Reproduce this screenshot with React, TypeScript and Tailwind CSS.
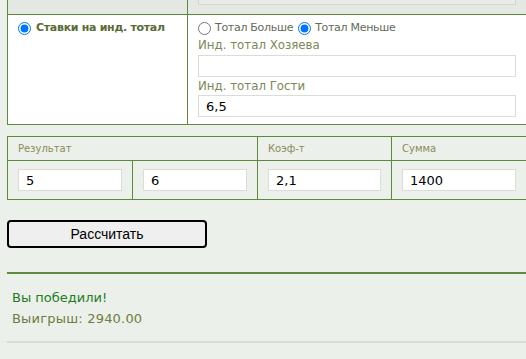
import React from "react";

const G = "border-[#5f8a3d]";

function Field({ value, className = "" }: { value?: string; className?: string }) {
  return (
    <input
      readOnly
      value={value ?? ""}
      className={
        "block w-full h-[22px] bg-white border border-[#d9dcd7] px-[7px] text-[13px] text-black outline-none font-['DejaVu_Sans',sans-serif] " +
        className
      }
    />
  );
}

function Radio({ checked }: { checked?: boolean }) {
  return (
    <input
      type="radio"
      readOnly
      checked={!!checked}
      className="m-0 w-[13px] h-[13px] shrink-0"
    />
  );
}

export default function App() {
  return (
    <div className="w-[526px] h-[359px] overflow-hidden bg-[#ecf0ea] font-['DejaVu_Sans',sans-serif]">
      <div className="pl-[7px]">
        {/* top table */}
        <div className={"w-[520px] border-l border-r border-b " + G}>
          <div className={"grid grid-cols-[180px_338px] h-[15px] bg-[#e4e8e2] border-b overflow-hidden " + G}>
            <div className={"border-r " + G}></div>
            <div className="px-[10px]">
              <div className="-mt-[17px] h-[22px] border border-[#d3d6d1] bg-[#e8ebe6]"></div>
            </div>
          </div>
          <div className="grid grid-cols-[180px_338px] bg-white">
            <div className={"border-r pl-[10px] pt-[6px] " + G}>
              <div className="flex items-center gap-[5px] h-[14px]">
                <Radio checked />
                <span className="text-[11px] tracking-[-0.3px] font-bold text-[#5a6b35]">Ставки на инд. тотал</span>
              </div>
            </div>
            <div className="px-[10px] pt-[6px] pb-[7px]">
              <div className="flex items-center h-[14px] text-[11px] tracking-[-0.3px] text-[#5f6b58]">
                <Radio />
                <span className="ml-[4px]">Тотал Больше</span>
                <span className="ml-[5px] flex"><Radio checked /></span>
                <span className="ml-[4px]">Тотал Меньше</span>
              </div>
              <div className="text-[11.8px] leading-[14px] text-[#7c8758] mt-[3px]">Инд. тотал Хозяева</div>
              <div className="mt-[3px]"><Field /></div>
              <div className="text-[11.8px] leading-[14px] text-[#7c8758] mt-[2px]">Инд. тотал Гости</div>
              <div className="mt-[2px]"><Field value="6,5" /></div>
            </div>
          </div>
        </div>

        {/* result table */}
        <div className={"mt-[11px] w-[520px] border " + G}>
          <div className={"grid grid-cols-[250px_134px_134px] h-[24px] border-b text-[10px] text-[#8a8c58] " + G}>
            <div className={"border-r pl-[10px] flex items-center " + G}>Результат</div>
            <div className={"border-r pl-[10px] flex items-center " + G}>Коэф-т</div>
            <div className="pl-[10px] flex items-center">Сумма</div>
          </div>
          <div className="grid grid-cols-[125px_125px_134px_134px]">
            <div className={"border-r px-[10px] py-[8px] " + G}><Field value="5" /></div>
            <div className={"border-r px-[10px] py-[8px] " + G}><Field value="6" /></div>
            <div className={"border-r px-[10px] py-[8px] " + G}><Field value="2,1" /></div>
            <div className="px-[10px] py-[8px]"><Field value="1400" /></div>
          </div>
        </div>

        <button className="mt-[20px] block w-[200px] h-[28px] border-2 border-black rounded-[4px] bg-[#efefef] text-[14px] text-black font-['Liberation_Sans',sans-serif]">
          Рассчитать
        </button>

        <div className="mt-[24px] h-[2px] bg-[#5f8a3d]"></div>

        <div className="mt-[13px] pl-[5px] text-[13px] leading-[21px]">
          <div className="text-[#237c1e]">Вы победили!</div>
          <div className="text-[#6e7c40] tracking-[0.2px]">Выигрыш: 2940.00</div>
        </div>

        <div className="mt-[12px] h-[2px] bg-[#d8ddd5]"></div>
      </div>
    </div>
  );
}
